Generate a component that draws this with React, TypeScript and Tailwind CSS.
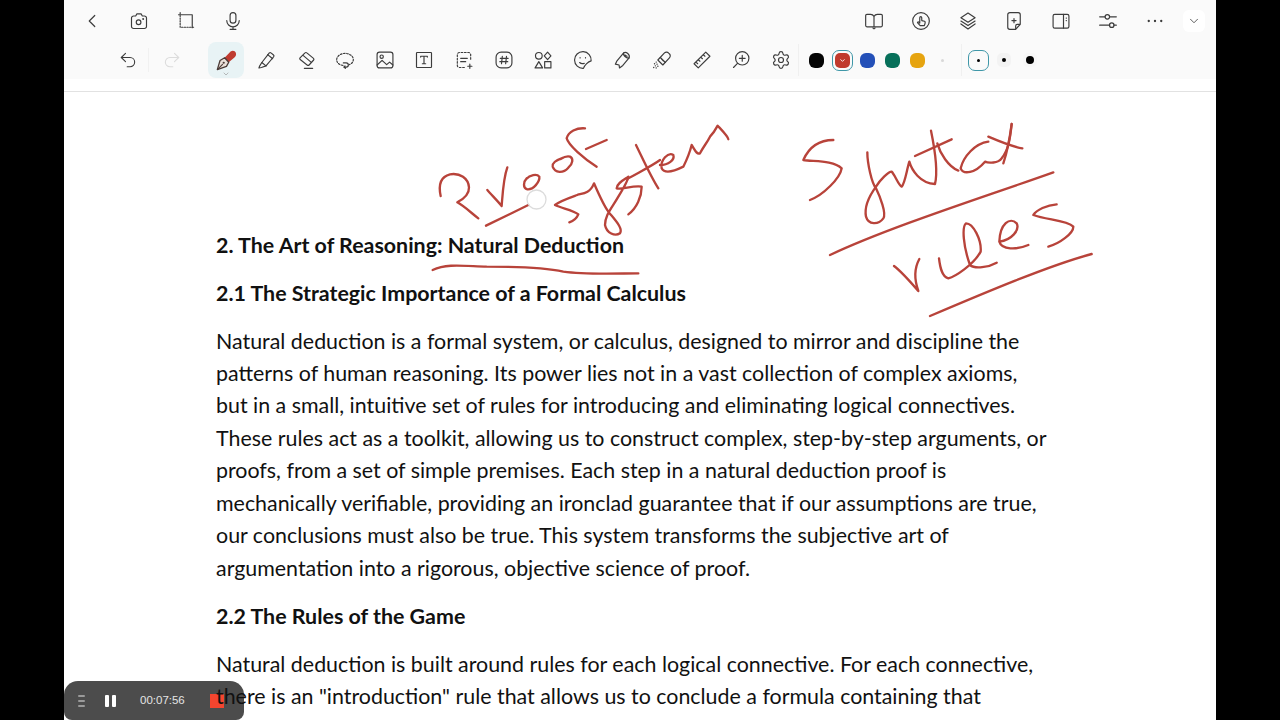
import type { ReactNode } from "react"
import { ChevronDown, ChevronLeft, Redo2, Settings, Undo2 } from "lucide-react"

function Ico({ children, size = 20, color = "#3c3c3c" }: { children: ReactNode; size?: number; color?: string }) {
  return (
    <svg width={size} height={size} viewBox="0 0 24 24" fill="none" stroke={color} strokeWidth="1.4" strokeLinecap="round" strokeLinejoin="round">
      {children}
    </svg>
  )
}

const topLeft: ReactNode[] = [
  <ChevronLeft key="back" size={22} strokeWidth={1.3} color="#3c3c3c" />,
  <Ico key="camera">
    <path d="M5.5 6H8l1.5-2.5h5L16 6h2.5A2.5 2.5 0 0 1 21 8.5v10a2.5 2.5 0 0 1-2.5 2.5h-13A2.5 2.5 0 0 1 3 18.500v-10A2.500 2.500 0 0 1 5.500 6z" />
    <circle cx="11.500" cy="13.500" r="2.800" />
    <circle cx="17" cy="9.500" r=".5" />
  </Ico>,
  <Ico key="crop">
    <path d="M3 4.500h16.500V20" />
    <path d="M5 2v17.500h17" strokeDasharray="1.600 1.600" />
  </Ico>,
  <Ico key="mic">
    <rect x="8.500" y="2" width="7" height="12.500" rx="3.500" />
    <path d="M4.500 11.500a7.500 7.500 0 0 0 15 0M12 19v3M8.500 22h7" />
  </Ico>,
]

const topRight: ReactNode[] = [
  <Ico key="book">
    <path d="M12 6.500C11 4.800 9.500 4 8 4H3.500A1.500 1.500 0 0 0 2 5.500v12A1.500 1.500 0 0 0 3.500 19H12zM12 6.500C13 4.800 14.500 4 16 4h4.500A1.500 1.500 0 0 1 22 5.500v12a1.500 1.500 0 0 1-1.500 1.500H12zM10.800 20.500l1.200 1 1.200-1" />
  </Ico>,
  <Ico key="hand">
    <circle cx="12" cy="12" r="10" />
    <path d="M10.500 14.500V8a1.200 1.200 0 0 1 2.400 0v3.500l3.300.8c.5.200.8.600.8 1.100 0 1.500-.4 2.800-1 4.100h-5l-3-3.200c-.6-.7.300-1.700 1.100-1.200z" />
  </Ico>,
  <Ico key="layers">
    <path d="M12 2.500l8.500 5.500-8.500 5.500L3.500 8z" />
    <path d="M3.500 12l8.500 5.500 8.500-5.500M3.500 15.500l8.500 6 8.500-6" />
  </Ico>,
  <Ico key="page">
    <path d="M7 2h10a2.500 2.500 0 0 1 2.500 2.500V16L14 22H7a2.500 2.500 0 0 1-2.500-2.500v-15A2.500 2.500 0 0 1 7 2zM19.500 16H16a2 2 0 0 0-2 2v4M12 9v5M9.500 11.500h5" />
  </Ico>,
  <Ico key="panel">
    <rect x="2.500" y="4" width="19" height="16.500" rx="2" />
    <path d="M15 4v16.500M18.200 8.500h.3M18.200 11.500h.3" />
  </Ico>,
  <Ico key="sliders">
    <path d="M2 7h6.500M14 7h8M2 17h12M19 17h3" />
    <circle cx="11.200" cy="7" r="2.700" />
    <circle cx="16.500" cy="17" r="2.700" />
  </Ico>,
  <Ico key="more">
    <circle cx="4.500" cy="12" r=".7" fill="#3c3c3c" />
    <circle cx="12" cy="12" r=".7" fill="#3c3c3c" />
    <circle cx="19.500" cy="12" r=".7" fill="#3c3c3c" />
  </Ico>,
]

const tools: ReactNode[] = [
  <Ico key="marker">
    <path d="M16 3.500a1.500 1.500 0 0 1 2 0l3 2.500a1.500 1.500 0 0 1 .2 2.100L12 19l-5-4z" />
    <path d="M7 15l-2.500 4-1 2.500 3-.5 5.500-2M14 5.500l6 5" />
  </Ico>,
  <Ico key="eraser">
    <path d="M13 3.500l8 6.500a1.500 1.500 0 0 1 .2 2l-5.500 6a1.500 1.500 0 0 1-2 .2L5 11.500a1.500 1.500 0 0 1-.2-2l6-6a1.500 1.500 0 0 1 2.200 0zM8.500 6.500l9.500 8M10 22h10" />
  </Ico>,
  <Ico key="lasso">
    <path d="M9.500 18.500C5 18 2 15 2 11.500S6.500 4 12 4s10 3.500 10 7.500c0 2.800-2 5-5 6.200" strokeDasharray="2 1.800" />
    <path d="M10 15.500h3.500a2.500 2.500 0 0 1 0 5H11M12.500 22l-2-1.500 1.500-1.500" />
  </Ico>,
  <Ico key="image">
    <rect x="2.500" y="2.500" width="19" height="19" rx="3" />
    <circle cx="8" cy="8" r="2" />
    <path d="M2.500 18l6-5.500 5.500 5 3.500-3 4 3.500" />
  </Ico>,
  <Ico key="text">
    <rect x="3" y="3" width="18" height="18" rx=".8" />
    <path d="M8 8.500V7.500h8v1M12 7.500v9M10 16.500h4" />
  </Ico>,
  <Ico key="scan">
    <path d="M20 11V5.500A2.500 2.500 0 0 0 17.500 3h-11A2.500 2.500 0 0 0 4 5.500v13A2.500 2.500 0 0 0 6.500 21H14" strokeDasharray="2 2" />
    <path d="M8 10h8M8 14h6M19 17v5M16.500 19.500h5" />
  </Ico>,
  <Ico key="hash">
    <rect x="2.500" y="2.500" width="19" height="19" rx="6" />
    <path d="M10 7.500L9 16.500M15 7.500l-1 9M7.500 10h9.500M7 14h9.500" />
  </Ico>,
  <Ico key="shapes">
    <circle cx="7" cy="7" r="4" />
    <path d="M17.500 2.500l4 4.500-4 4.500-4-4.500zM7 14l4.500 7.500h-9zM14 14h7.500v7.500H14z" />
  </Ico>,
  <Ico key="sticker">
    <path d="M21.800 13A10 10 0 1 0 12.500 22c1-3.500 5.500-8 9.300-9z" />
    <path d="M8.500 9v.5M15 9v.5M8 15c1.500 1.500 3.500 1.500 5.500 1" />
  </Ico>,
  <Ico key="tape">
    <path d="M6 13L14 3.500c3-2 8 2 6.500 6L13 18.500l-4 3-.5-3.500-4.500-1z" />
    <path d="M14 3.500c-1.500 2.500 3.500 7 6.500 6M15.500 5.800c.8.900 1.800 1.500 2.800 1.700" />
  </Ico>,
  <Ico key="laser">
    <path d="M15 3.500a3.500 3.500 0 0 1 5 .2l.8.800a3.500 3.500 0 0 1 .1 5L13 18l-6-6z" />
    <path d="M10 9l6 6M11.500 11l2 2" />
    <path d="M5 14.500h.1M3 16.500h.1M6 17h.1M4 19h.1M7 19.500h.1M2 21h.1M5 21.500h.1" strokeWidth="1.600" />
  </Ico>,
  <Ico key="ruler">
    <path d="M16.500 2.500l5 5L7.500 21.500l-5-5zM13.500 5.500l2 2M10.500 8.500l2 2M7.500 11.500l2 2M4.800 14.500l2 2" />
  </Ico>,
  <Ico key="zoom">
    <circle cx="13.500" cy="10" r="8" />
    <path d="M7.800 16L3 21M13.500 6.500v7M10 10h7" />
  </Ico>,
  <Settings key="gear" size={20} strokeWidth={1.4} color="#3c3c3c" />,
]

const colors = ["bg-[#050505]", "bg-[#c03a2d]", "bg-[#2450b8]", "bg-[#07705a]", "bg-[#e6a410]"]

function PenIcon() {
  return (
    <svg width="22" height="22" viewBox="0 0 24 24">
      <path d="M10.500 9.500L17 2.800C19 1 22 1.800 22.700 4s0 3.800-1.500 5.300L15 14.500z" fill="#bf3b30" />
      <path d="M10.500 9.500l4.500 5-2.500 4.500L2.500 22.500 5.500 12.500z" fill="#eadfd8" stroke="#4a3a36" strokeWidth="1.400" strokeLinejoin="round" />
      <path d="M2.500 22.500l6-6" stroke="#4a3a36" strokeWidth="1.200" />
      <circle cx="9.500" cy="15" r="1.200" fill="#4a3a36" />
    </svg>
  )
}

function Ink() {
  return (
    <svg className="absolute left-0 top-0 z-20 pointer-events-none" width="1280" height="720" viewBox="0 0 1280 720" fill="none">
      {/* Proof + start of system, 3x crop coords */}
      <g stroke="#b8433a" strokeWidth="7" strokeLinecap="round" strokeLinejoin="round" transform="translate(420 110) scale(.33333)">
        <path d="M62 258C55 225 62 200 90 193C120 188 145 205 147 232C148 255 125 270 112 277C135 290 155 310 175 325" />
        <path d="M202 240C215 255 235 275 245 288C248 250 250 205 262 172" />
        <path d="M320 205C310 215 308 235 322 238C340 240 360 215 358 200C350 190 330 195 318 208" />
        <path d="M198 347L325 285" />
        <path d="M648 105C670 150 695 205 715 235" />
        <path d="M625 205C670 180 700 165 720 150" />
        <path d="M720 165C745 165 765 150 760 135C745 125 720 150 725 175C735 195 770 180 790 170C800 150 810 125 815 105C825 120 830 135 840 130C850 110 860 100 870 80C880 70 885 62 893 47C905 60 925 80 925 88" />
        <path d="M38 480C80 460 130 468 200 470C300 470 370 472 430 485C500 495 600 490 655 490" />
      </g>
      <g stroke="#b8433a" strokeWidth="7" strokeLinecap="round" strokeLinejoin="round" transform="translate(540 125) scale(.33333)">
        <path d="M135 10C110 8 85 20 80 40C85 60 130 100 170 125" />
        <path d="M138 72L200 45" />
        <path d="M70 98C50 105 35 115 38 125C45 145 70 145 85 128C100 115 100 100 90 95C80 92 70 97 62 102" />
        <path d="M112 210C90 218 60 228 45 240C65 250 100 255 115 268C110 280 100 288 88 292" />
        <path d="M115 208C130 205 150 205 162 175C175 205 190 240 205 260C225 285 250 310 240 325C225 335 200 325 195 300C195 270 215 250 235 215C250 190 265 165 265 155C250 165 230 175 230 190C245 195 280 180 305 185C305 215 290 250 265 268" />
      </g>
      <circle cx="536.500" cy="199.500" r="9.500" stroke="#dcdcdc" strokeWidth="1.300" fill="#ffffff" fillOpacity=".5" />
      {/* Syntax / rules */}
      <g stroke="#b8433a" strokeWidth="7" strokeLinecap="round" strokeLinejoin="round" transform="translate(790 110) scale(.33333)">
        <path d="M130 90C95 90 60 105 40 150C70 155 130 150 155 175C150 205 100 255 60 270" />
        <path d="M120 435C300 350 600 255 790 187" />
        <path d="M628 395C665 390 690 360 680 340C660 320 630 340 628 395C635 420 680 420 715 405" />
        <path d="M800 283C770 285 740 300 730 315C770 330 830 330 850 350C850 370 810 400 775 410" />
        <path d="M420 618C580 550 780 465 905 432" />
      </g>
      <g stroke="#b8433a" strokeWidth="7" strokeLinecap="round" strokeLinejoin="round" transform="translate(860 120) scale(.33333)">
        <path d="M22 97C22 130 35 190 48 205C60 230 80 280 70 295C55 315 25 315 18 290C12 260 30 225 48 200C60 180 85 155 95 155C105 165 115 195 125 200C135 190 140 150 148 125C155 150 180 190 225 192C235 150 225 90 213 32" />
        <path d="M165 108L275 58" />
        <path d="M232 70C240 100 265 140 295 152" />
        <path d="M385 65C345 70 310 110 302 145C310 165 345 160 375 125C385 130 415 130 425 115C445 90 450 60 455 12" />
        <path d="M455 12C450 50 440 100 430 130" />
        <path d="M385 50C420 65 455 80 487 85" />
      </g>
      <g stroke="#b8433a" strokeWidth="7" strokeLinecap="round" strokeLinejoin="round" transform="translate(890 210) scale(.33333)">
        <path d="M12 168C35 185 65 220 85 243C75 215 70 180 88 147" />
        <path d="M147 145C150 170 155 200 175 205C195 200 250 165 272 125C275 90 250 40 228 40C215 50 220 110 240 165C255 178 295 172 320 158" />
      </g>
    </svg>
  )
}

function Line({ children }: { children: ReactNode }) {
  return <div className="h-[32.430px] leading-[32.430px] whitespace-nowrap">{children}</div>
}

function Heading({ children }: { children: ReactNode }) {
  return <div className="h-[32.430px] leading-[32.430px] whitespace-nowrap font-bold mb-[15.600px]">{children}</div>
}

export default function App() {
  return (
    <div className="relative h-screen w-full overflow-hidden bg-black font-['Lato','Liberation_Sans',sans-serif]">
      <div className="relative ml-16 h-full w-[1152px] bg-white">
        <div className="h-[41px] flex items-center bg-[#fafafa]">
          <div className="ml-[4.500px] flex">
            {topLeft.map((icon, i) => (
              <div key={i} className="flex w-[47px] items-center justify-center">{icon}</div>
            ))}
          </div>
          <div className="ml-auto flex">
            {topRight.map((icon, i) => (
              <div key={i} className="flex w-[46.800px] items-center justify-center">{icon}</div>
            ))}
          </div>
          <div className="ml-[4.800px] mr-[11px] flex h-[22px] w-[22px] items-center justify-center rounded-md bg-white">
            <ChevronDown size={14} strokeWidth={1.4} color="#3c3c3c" />
          </div>
        </div>

        <div className="h-[38px] flex items-center bg-[#fafafa] pl-[44px]">
          <div className="flex w-10 justify-center"><Undo2 size={20} strokeWidth={1.3} color="#3c3c3c" /></div>
          <div className="h-6 w-px bg-[#f1f1f1]" />
          <div className="flex w-[45px] justify-center"><Redo2 size={20} strokeWidth={1.3} color="#dcdcdc" /></div>
          <div className="relative ml-[14px] mr-[2.200px] flex h-9 w-9 items-center justify-center rounded-lg bg-[#e8f3f5]">
            <PenIcon />
            <ChevronDown className="absolute bottom-0 left-[14px]" size={8} color="#9a9a9a" />
          </div>
          {tools.map((icon, i) => (
            <div key={i} className="flex w-[39.600px] justify-center">{icon}</div>
          ))}
          <div className="-ml-[3px] mr-[5.800px] h-8 w-px bg-[#f0f0f0]" />
          {colors.map((c, i) => (
            <div key={c} className="flex w-[25.200px] justify-center">
              {i === 1 ? (
                <div className="flex h-[21px] w-[21px] items-center justify-center rounded-[7px] border border-[#3f97a8]">
                  <div className={`flex h-[15px] w-[15px] items-center justify-center rounded-[5px] ${c}`}>
                    <ChevronDown size={7} strokeWidth={3} color="#ffffff" />
                  </div>
                </div>
              ) : (
                <div className={`h-[15px] w-[15px] rounded-[6px] ${c}`} />
              )}
            </div>
          ))}
          <div className="flex w-[25.200px] justify-center">
            <div className="h-[3px] w-[3px] rounded-full bg-[#d8d8d8]" />
          </div>
          <div className="ml-[6px] mr-[3.600px] h-8 w-px bg-[#f0f0f0]" />
          <div className="flex w-[25.500px] justify-center">
            <div className="flex h-[21px] w-[21px] items-center justify-center rounded-[7px] border border-[#3f97a8]">
              <div className="h-[3px] w-[3px] rounded-full bg-black" />
            </div>
          </div>
          <div className="flex w-[25.500px] justify-center">
            <div className="flex h-[14px] w-[14px] items-center justify-center rounded-[5px] bg-[#f3f3f3]">
              <div className="h-1 w-1 rounded-full bg-black" />
            </div>
          </div>
          <div className="flex w-[25.500px] justify-center">
            <div className="flex h-[14px] w-[14px] items-center justify-center rounded-[5px] bg-[#f7f7f7]">
              <div className="h-2 w-2 rounded-full bg-black" />
            </div>
          </div>
        </div>

        <div className="h-[13px] border-b border-[#e2e2e2]" />

        <div className="relative z-10 pl-[152px] pt-[136.600px] text-[21.400px] text-[#111111]">
          <Heading>2. The Art of Reasoning: Natural Deduction</Heading>
          <Heading>2.1 The Strategic Importance of a Formal Calculus</Heading>
          <div className="mb-[15.600px]">
            <Line>Natural deduction is a formal system, or calculus, designed to mirror and discipline the</Line>
            <Line>patterns of human reasoning. Its power lies not in a vast collection of complex axioms,</Line>
            <Line>but in a small, intuitive set of rules for introducing and eliminating logical connectives.</Line>
            <Line>These rules act as a toolkit, allowing us to construct complex, step-by-step arguments, or</Line>
            <Line>proofs, from a set of simple premises. Each step in a natural deduction proof is</Line>
            <Line>mechanically verifiable, providing an ironclad guarantee that if our assumptions are true,</Line>
            <Line>our conclusions must also be true. This system transforms the subjective art of</Line>
            <Line>argumentation into a rigorous, objective science of proof.</Line>
          </div>
          <Heading>2.2 The Rules of the Game</Heading>
          <Line>Natural deduction is built around rules for each logical connective. For each connective,</Line>
          <Line>there is an "introduction" rule that allows us to conclude a formula containing that</Line>
        </div>

        <div className="absolute bottom-0 left-0 flex h-[39px] w-[180px] items-center rounded-t-[14px] rounded-b-[8px] bg-[#4c4c4c]">
          <div className="ml-[14px] flex flex-col gap-[3px]">
            <div className="h-[2px] w-[7px] rounded-sm bg-[#9a9a9a]" />
            <div className="h-[2px] w-[7px] rounded-sm bg-[#9a9a9a]" />
            <div className="h-[2px] w-[7px] rounded-sm bg-[#9a9a9a]" />
          </div>
          <div className="ml-[20px] flex gap-[3px]">
            <div className="h-3 w-[4px] rounded-[1px] bg-white" />
            <div className="h-3 w-[4px] rounded-[1px] bg-white" />
          </div>
          <span className="ml-[24px] w-[46px] whitespace-nowrap font-['Liberation_Sans',sans-serif] text-[11.500px] text-[#e4e4e4]">00:07:56</span>
          <div className="ml-[24px] h-[14px] w-[14px] bg-[#f4452f]" />
        </div>
      </div>
      <Ink />
    </div>
  )
}
